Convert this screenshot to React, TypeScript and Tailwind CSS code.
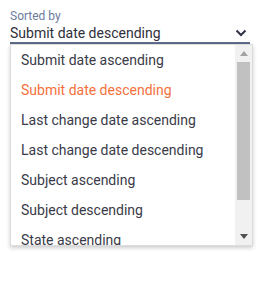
import React from 'react'

const OPTIONS = [
  'Submit date ascending',
  'Submit date descending',
  'Last change date ascending',
  'Last change date descending',
  'Subject ascending',
  'Subject descending',
  'State ascending',
  'State descending',
]

export default function App() {
  const selected = 'Submit date descending'
  return (
    <div className="w-[264px] h-[281px] bg-white" style={{ fontFamily: 'Roboto, "Noto Sans", sans-serif' }}>
      <div className="pt-[8px] pl-[10px] w-[250px]">
        <div className="text-[12px] leading-[16px] text-[#6b7c9c]">Sorted by</div>
        <div className="flex items-center justify-between border-b-2 border-[#5c6b88] h-[20px]">
          <span className="text-[14px] leading-[18px] text-[#2f2f3a]">{selected}</span>
          <svg width="12" height="8" viewBox="0 0 12 8" className="mr-[3px]">
            <path d="M1.5 1.5 L6 6 L10.5 1.5" fill="none" stroke="#2f3345" strokeWidth="2" />
          </svg>
        </div>
        <div className="flex w-[243px] h-[202px] bg-white border border-[#dcdcdc] shadow-[0_2px_4px_rgba(0,0,0,0.2)]">
          <ul className="flex-1 overflow-hidden">
            {OPTIONS.map(o => (
              <li
                key={o}
                className={`h-[30px] flex items-center pl-[10px] text-[14px] ${o === selected ? 'text-[#f5703c]' : 'text-[#3a3a48]'}`}
              >
                {o}
              </li>
            ))}
          </ul>
          <div className="w-[17px] bg-[#f1f1f1] flex flex-col items-center">
            <div className="h-[17px] flex items-center justify-center">
              <svg width="8" height="5" viewBox="0 0 8 5"><path d="M0 5 L4 0 L8 5 Z" fill="#a3a3a3" /></svg>
            </div>
            <div className="w-[13px] h-[138px] bg-[#c1c1c1]" />
            <div className="flex-1" />
            <div className="h-[17px] flex items-center justify-center">
              <svg width="8" height="5" viewBox="0 0 8 5"><path d="M0 0 L4 5 L8 0 Z" fill="#505050" /></svg>
            </div>
          </div>
        </div>
      </div>
    </div>
  )
}
